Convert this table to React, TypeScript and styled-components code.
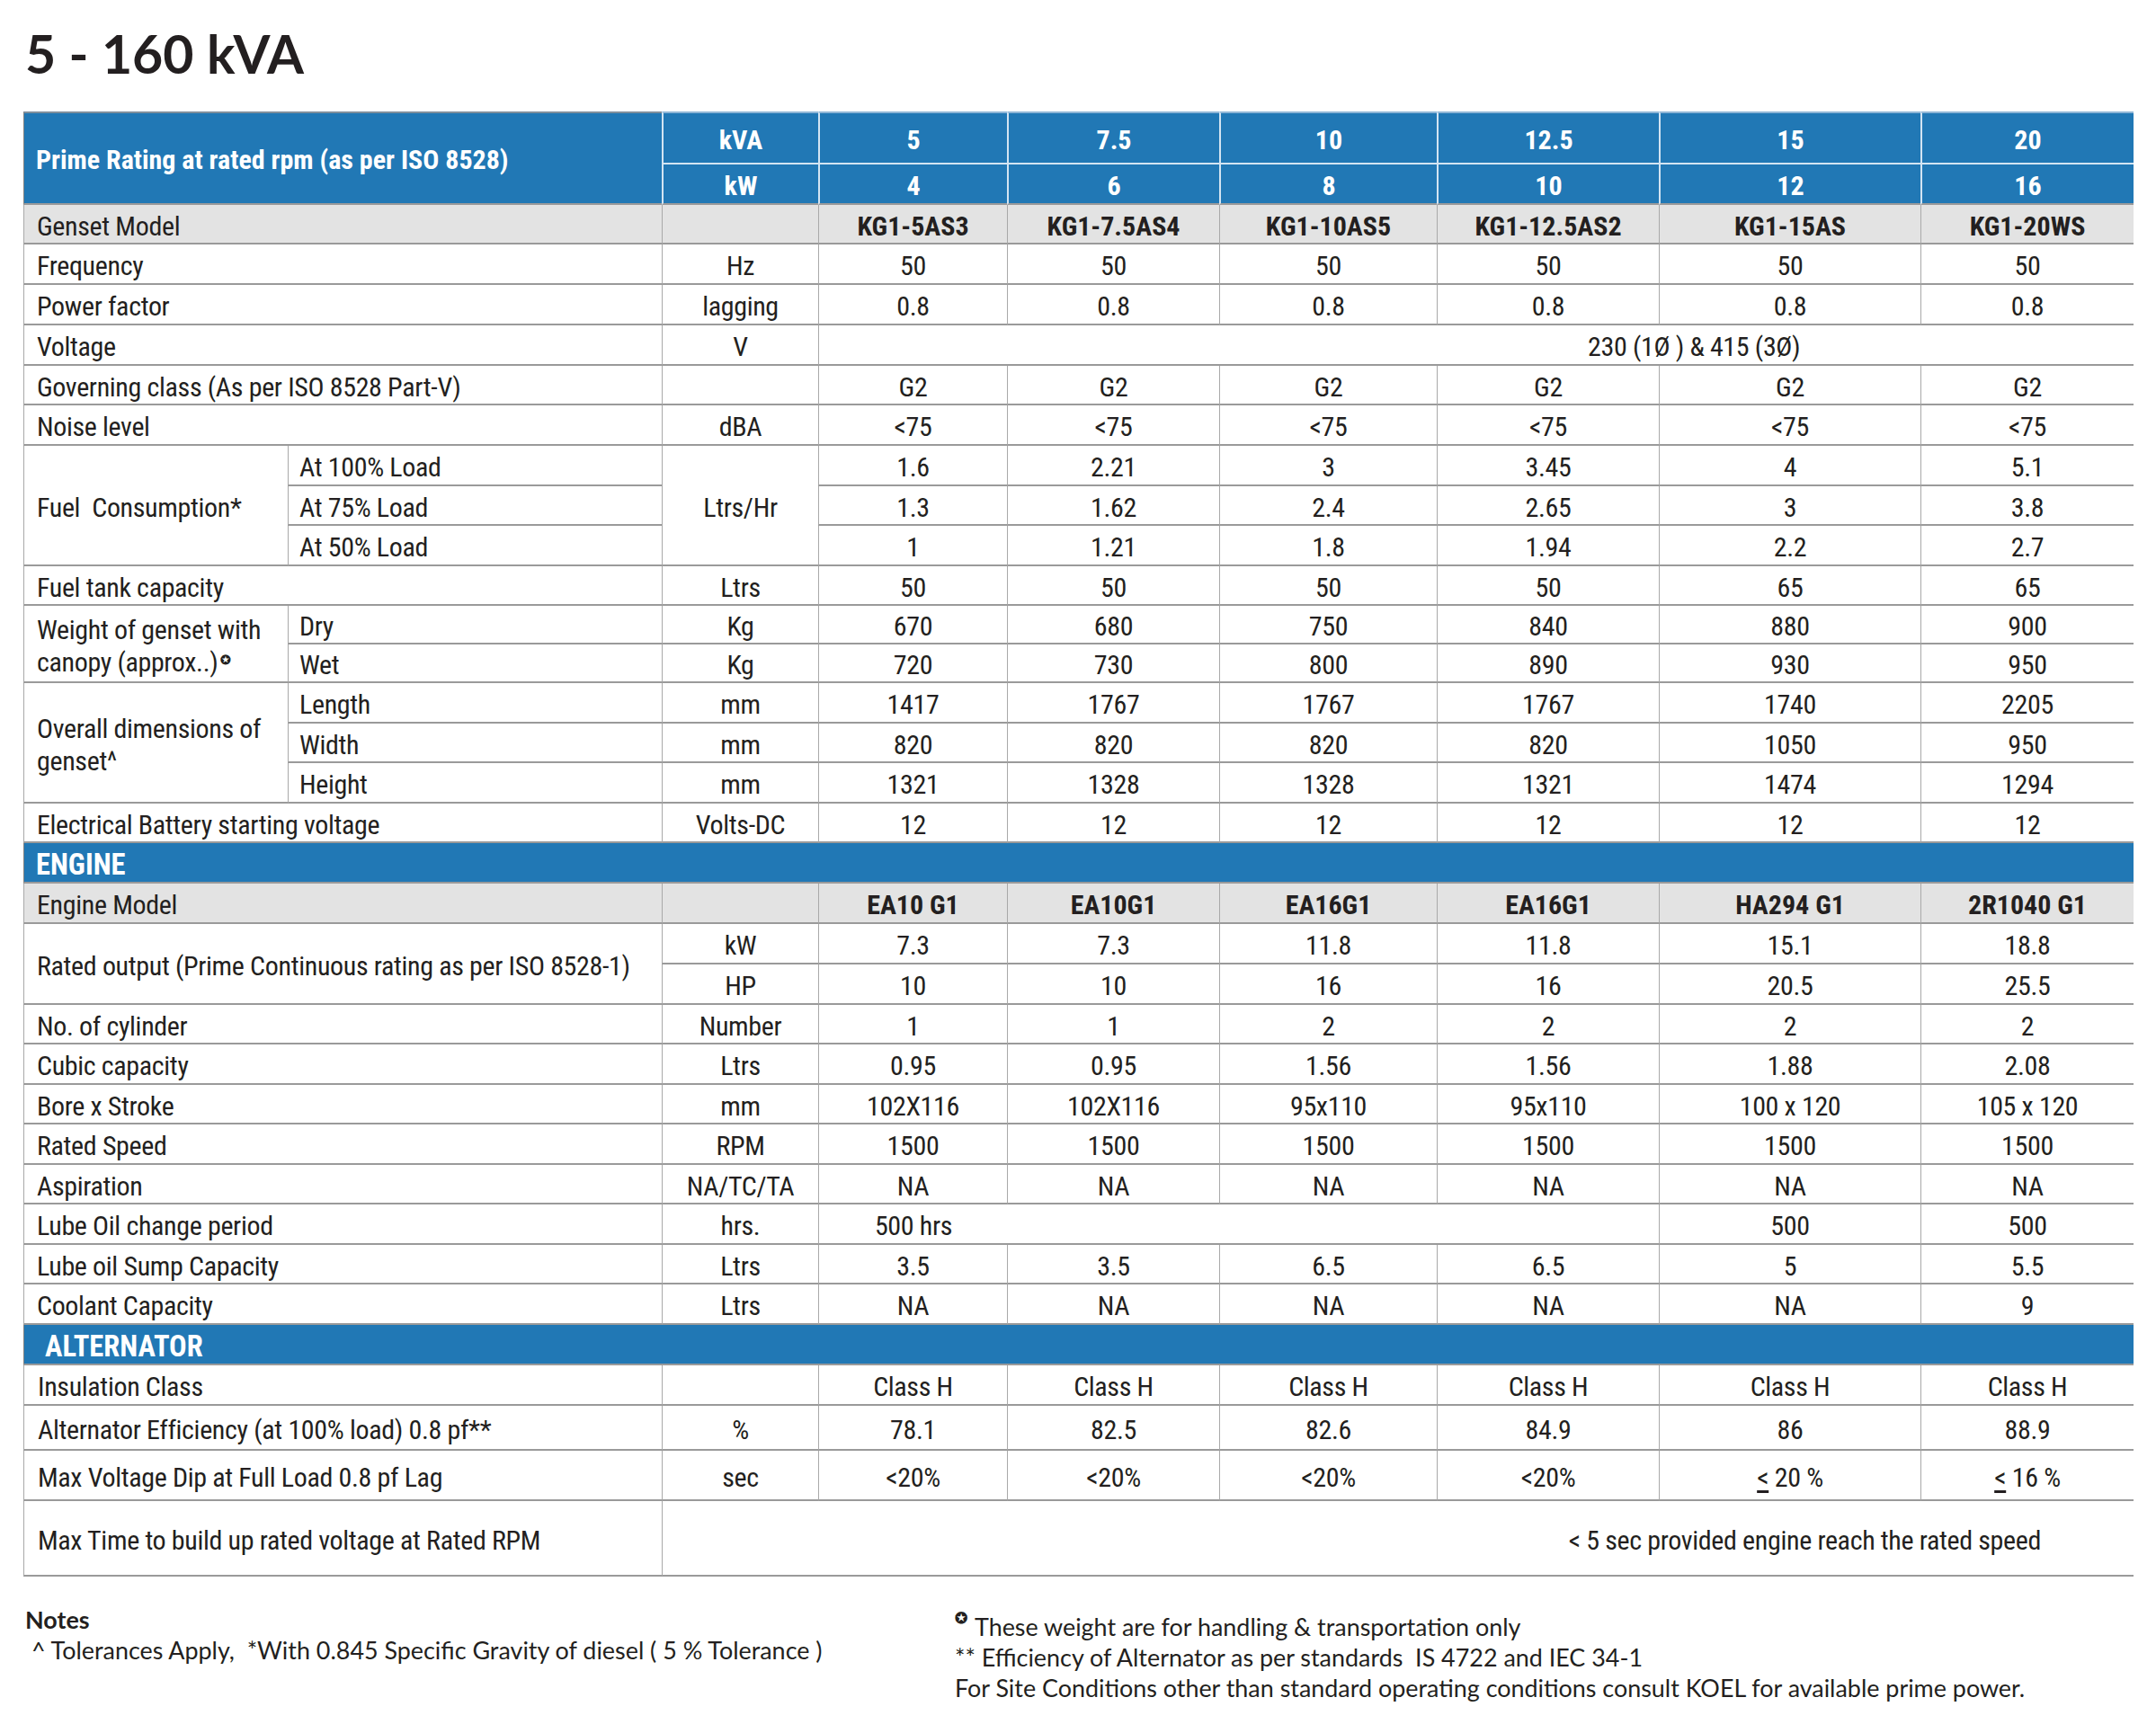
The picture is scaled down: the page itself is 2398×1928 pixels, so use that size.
import React from 'react';
import styled, { createGlobalStyle } from 'styled-components';

const BLUE = '#2178b5';
const SHADE = '#e3e3e3';
const HLINE = '#9a9a9a';
const VLINE = '#a9a9a9';
const HEADLINE = '#d3e4f2';
const INK = '#231f20';
const NARROW = '"Roboto Condensed", "Roboto", "Liberation Sans", sans-serif';

const GlobalStyle = createGlobalStyle`
  html, body { margin: 0; padding: 0; background: #ffffff; }
  body { color: ${INK}; font-family: ${NARROW}; }
`;

const Page = styled.div`
  width: 2398px;
  min-height: 1928px;
  box-sizing: border-box;
  padding: 28px 0 0 26px;
`;

const Title = styled.h1`
  margin: 0 0 32px 2px;
  font-family: Lato, "Open Sans", sans-serif;
  font-weight: 700;
  font-size: 59px;
  line-height: 64px;
  color: ${INK};
`;

const Table = styled.div`
  display: grid;
  width: 2347px;
  grid-template-columns: 294px 416px 174px 210px 236px 242px 247px 291px 237px;
  grid-template-rows:
    59px 45px 44px 45px 45px 45px 44px 45px 45px 44px 45px 44px 43px 43px 45px 44px 45px 44px
    45px 45px 45px 45px 44px 45px 44px 45px 44px 45px 44px 45px
    45px 45px 50px 56px 84px;
  font-family: ${NARROW};
  font-stretch: condensed;
  font-size: 30px;
  letter-spacing: -0.35px;
  color: ${INK};
`;

type SpanProps = { $span?: number; $rows?: number };

const Head = styled.div<SpanProps & { $first?: boolean; $bottom?: boolean }>`
  grid-column: span ${(p) => p.$span ?? 1};
  grid-row: span ${(p) => p.$rows ?? 1};
  box-sizing: border-box;
  display: flex;
  align-items: center;
  justify-content: ${(p) => (p.$first ? 'flex-start' : 'center')};
  padding-left: ${(p) => (p.$first ? '13px' : '0')};
  padding-top: 3px;
  background: ${BLUE};
  color: #ffffff;
  font-weight: 700;
  letter-spacing: 0;
  border-top: 2px solid ${(p) => (p.$first ? '#7f8f9c' : '#8fb6d6')};
  border-left: ${(p) => (p.$first ? `1px solid #808080` : `2px solid ${HEADLINE}`)};
  border-bottom: 2px solid ${(p) => (p.$bottom ? HLINE : HEADLINE)};
`;

const HeadSub = styled(Head)`
  border-top: none;
`;

const Section = styled.div<{ $indent: number }>`
  grid-column: span 9;
  box-sizing: border-box;
  display: flex;
  align-items: center;
  padding-left: ${(p) => p.$indent}px;
  padding-top: 4px;
  background: ${BLUE};
  color: #ffffff;
  font-weight: 700;
  font-size: 32.5px;
  letter-spacing: 0;
  border-left: 1px solid #808080;
  border-bottom: 2px solid ${HLINE};
`;

const Cell = styled.div<SpanProps & { $shade?: boolean }>`
  grid-column: span ${(p) => p.$span ?? 1};
  grid-row: span ${(p) => p.$rows ?? 1};
  box-sizing: border-box;
  display: flex;
  align-items: center;
  min-width: 0;
  padding-top: 5px;
  background: ${(p) => (p.$shade ? SHADE : '#ffffff')};
  border-left: 1px solid ${VLINE};
  border-bottom: 2px solid ${HLINE};
  line-height: 36px;
`;

const Label = styled(Cell)<{ $pad?: number }>`
  padding-left: ${(p) => p.$pad ?? 14}px;
  padding-right: 8px;
  white-space: pre-wrap;
`;

const Lines = styled.div`
  display: flex;
  flex-direction: column;
`;

const Line = styled.div`
  white-space: pre;
`;

const Value = styled(Cell)<{ $bold?: boolean }>`
  justify-content: center;
  font-weight: ${(p) => (p.$bold ? 700 : 400)};
  letter-spacing: ${(p) => (p.$bold ? '0' : '-0.35px')};
  white-space: pre;
`;

const Wide = styled(Cell)<{ $from: 'left' | 'right'; $offset: number }>`
  justify-content: ${(p) => (p.$from === 'left' ? 'flex-start' : 'flex-end')};
  padding-left: ${(p) => (p.$from === 'left' ? p.$offset : 0)}px;
  padding-right: ${(p) => (p.$from === 'right' ? p.$offset : 0)}px;
  white-space: pre;
`;

const Slot = styled.span<{ $w: number }>`
  display: inline-block;
  width: ${(p) => p.$w}px;
  text-align: center;
`;

const Mark = styled.span`
  display: inline-block;
  font-size: 14px;
  font-weight: 700;
  line-height: 14px;
  vertical-align: 8px;
  margin-left: 3px;
`;

const Le = styled.span`
  text-decoration: underline;
  text-underline-offset: 4px;
`;

const Footer = styled.div`
  display: flex;
  margin-top: 31px;
  font-family: Lato, "Open Sans", sans-serif;
  font-size: 26.9px;
  line-height: 34px;
  color: ${INK};
`;

const NotesLeft = styled.div`
  width: 1034px;
  padding-left: 2px;
`;

const NotesTitle = styled.div`
  font-weight: 700;
`;

const NoteLine = styled.div`
  white-space: pre;
`;

const NotesRight = styled.div`
  margin-top: 8px;
`;

const Star = styled.span`
  display: inline-block;
  font-size: 17px;
  font-weight: 700;
  vertical-align: 14px;
  line-height: 0;
  margin-right: 8px;
`;

const kva = ['5', '7.5', '10', '12.5', '15', '20'];
const kw = ['4', '6', '8', '10', '12', '16'];
const models = ['KG1-5AS3', 'KG1-7.5AS4', 'KG1-10AS5', 'KG1-12.5AS2', 'KG1-15AS', 'KG1-20WS'];
const six = (v: string) => [v, v, v, v, v, v];

type RowDef = { label: string; unit: string; values: React.ReactNode[] };

const genset1: RowDef[] = [
  { label: 'Frequency', unit: 'Hz', values: six('50') },
  { label: 'Power factor', unit: 'lagging', values: six('0.8') },
];

const genset2: RowDef[] = [
  { label: 'Governing class (As per ISO 8528 Part-V)', unit: '', values: six('G2') },
  { label: 'Noise level', unit: 'dBA', values: six('<75') },
];

const fuel = [
  { sub: 'At 100% Load', values: ['1.6', '2.21', '3', '3.45', '4', '5.1'] },
  { sub: 'At 75% Load', values: ['1.3', '1.62', '2.4', '2.65', '3', '3.8'] },
  { sub: 'At 50% Load', values: ['1', '1.21', '1.8', '1.94', '2.2', '2.7'] },
];

const weight = [
  { sub: 'Dry', unit: 'Kg', values: ['670', '680', '750', '840', '880', '900'] },
  { sub: 'Wet', unit: 'Kg', values: ['720', '730', '800', '890', '930', '950'] },
];

const dims = [
  { sub: 'Length', unit: 'mm', values: ['1417', '1767', '1767', '1767', '1740', '2205'] },
  { sub: 'Width', unit: 'mm', values: ['820', '820', '820', '820', '1050', '950'] },
  { sub: 'Height', unit: 'mm', values: ['1321', '1328', '1328', '1321', '1474', '1294'] },
];

const engineRows: RowDef[] = [
  { label: 'No. of cylinder', unit: 'Number', values: ['1', '1', '2', '2', '2', '2'] },
  { label: 'Cubic capacity', unit: 'Ltrs', values: ['0.95', '0.95', '1.56', '1.56', '1.88', '2.08'] },
  { label: 'Bore x Stroke', unit: 'mm', values: ['102X116', '102X116', '95x110', '95x110', '100 x 120', '105 x 120'] },
  { label: 'Rated Speed', unit: 'RPM', values: six('1500') },
  { label: 'Aspiration', unit: 'NA/TC/TA', values: six('NA') },
];

const engineRows2: RowDef[] = [
  { label: 'Lube oil Sump Capacity', unit: 'Ltrs', values: ['3.5', '3.5', '6.5', '6.5', '5', '5.5'] },
  { label: 'Coolant Capacity', unit: 'Ltrs', values: ['NA', 'NA', 'NA', 'NA', 'NA', '9'] },
];

const altRows: RowDef[] = [
  { label: 'Insulation Class', unit: '', values: six('Class H') },
  { label: 'Alternator Efficiency (at 100% load) 0.8 pf**', unit: '%', values: ['78.1', '82.5', '82.6', '84.9', '86', '88.9'] },
  {
    label: 'Max Voltage Dip at Full Load 0.8 pf Lag',
    unit: 'sec',
    values: [
      '<20%',
      '<20%',
      '<20%',
      '<20%',
      <>
        <Le>&lt;</Le> 20 %
      </>,
      <>
        <Le>&lt;</Le> 16 %
      </>,
    ],
  },
];

const Values: React.FC<{ values: React.ReactNode[]; shade?: boolean; bold?: boolean }> = ({ values, shade, bold }) => (
  <>
    {values.map((v, i) => (
      <Value key={i} $shade={shade} $bold={bold}>
        {v}
      </Value>
    ))}
  </>
);

const SimpleRow: React.FC<{ row: RowDef; pad?: number }> = ({ row, pad }) => (
  <>
    <Label $span={2} $pad={pad}>
      {row.label}
    </Label>
    <Value>{row.unit}</Value>
    <Values values={row.values} />
  </>
);

export default function App() {
  return (
    <>
      <GlobalStyle />
      <Page>
        <Title>5 - 160 kVA</Title>
        <Table>
          <Head $span={2} $rows={2} $first $bottom>
            Prime Rating at rated rpm (as per ISO 8528)
          </Head>
          <Head>kVA</Head>
          {kva.map((v) => (
            <Head key={v}>{v}</Head>
          ))}
          <HeadSub $bottom>kW</HeadSub>
          {kw.map((v) => (
            <HeadSub key={v} $bottom>
              {v}
            </HeadSub>
          ))}

          <Label $span={2} $shade>
            Genset Model
          </Label>
          <Value $shade />
          <Values values={models} shade bold />

          {genset1.map((r) => (
            <SimpleRow key={r.label} row={r} />
          ))}

          <Label $span={2}>Voltage</Label>
          <Value>V</Value>
          <Wide $span={6} $from="left" $offset={855}>
            230 (1Ø ) &amp; 415 (3Ø)
          </Wide>

          {genset2.map((r) => (
            <SimpleRow key={r.label} row={r} />
          ))}

          <Label $rows={3}>{'Fuel  Consumption*'}</Label>
          <Label $pad={12}>{fuel[0].sub}</Label>
          <Value $rows={3}>Ltrs/Hr</Value>
          <Values values={fuel[0].values} />
          <Label $pad={12}>{fuel[1].sub}</Label>
          <Values values={fuel[1].values} />
          <Label $pad={12}>{fuel[2].sub}</Label>
          <Values values={fuel[2].values} />

          <SimpleRow row={{ label: 'Fuel tank capacity', unit: 'Ltrs', values: ['50', '50', '50', '50', '65', '65'] }} />

          <Label $rows={2}>
            <Lines>
              <Line>Weight of genset with</Line>
              <Line>
                canopy (approx..)<Mark>✪</Mark>
              </Line>
            </Lines>
          </Label>
          {weight.map((w) => (
            <React.Fragment key={w.sub}>
              <Label $pad={12}>{w.sub}</Label>
              <Value>{w.unit}</Value>
              <Values values={w.values} />
            </React.Fragment>
          ))}

          <Label $rows={3}>
            <Lines>
              <Line>Overall dimensions of</Line>
              <Line>genset^</Line>
            </Lines>
          </Label>
          {dims.map((d) => (
            <React.Fragment key={d.sub}>
              <Label $pad={12}>{d.sub}</Label>
              <Value>{d.unit}</Value>
              <Values values={d.values} />
            </React.Fragment>
          ))}

          <SimpleRow row={{ label: 'Electrical Battery starting voltage', unit: 'Volts-DC', values: six('12') }} />

          <Section $indent={13}>ENGINE</Section>

          <Label $span={2} $shade>
            Engine Model
          </Label>
          <Value $shade />
          <Values values={['EA10 G1', 'EA10G1', 'EA16G1', 'EA16G1', 'HA294 G1', '2R1040 G1']} shade bold />

          <Label $span={2} $rows={2}>
            Rated output (Prime Continuous rating as per ISO 8528-1)
          </Label>
          <Value>kW</Value>
          <Values values={['7.3', '7.3', '11.8', '11.8', '15.1', '18.8']} />
          <Value>HP</Value>
          <Values values={['10', '10', '16', '16', '20.5', '25.5']} />

          {engineRows.map((r) => (
            <SimpleRow key={r.label} row={r} />
          ))}

          <Label $span={2}>Lube Oil change period</Label>
          <Value>hrs.</Value>
          <Wide $span={4} $from="left" $offset={0}>
            <Slot $w={210}>500 hrs</Slot>
          </Wide>
          <Value>500</Value>
          <Value>500</Value>

          {engineRows2.map((r) => (
            <SimpleRow key={r.label} row={r} />
          ))}

          <Section $indent={23}>ALTERNATOR</Section>

          {altRows.map((r) => (
            <SimpleRow key={r.label} row={r} pad={15} />
          ))}

          <Label $span={2} $pad={15}>
            Max Time to build up rated voltage at Rated RPM
          </Label>
          <Wide $span={7} $from="right" $offset={103}>
            &lt; 5 sec provided engine reach the rated speed
          </Wide>
        </Table>

        <Footer>
          <NotesLeft>
            <NotesTitle>Notes</NotesTitle>
            <NoteLine>{' ^ Tolerances Apply,  *With 0.845 Specific Gravity of diesel ( 5 % Tolerance )'}</NoteLine>
          </NotesLeft>
          <NotesRight>
            <NoteLine>
              <Star>✪</Star>These weight are for handling &amp; transportation only
            </NoteLine>
            <NoteLine>{'** Efficiency of Alternator as per standards  IS 4722 and IEC 34-1'}</NoteLine>
            <NoteLine>For Site Conditions other than standard operating conditions consult KOEL for available prime power.</NoteLine>
          </NotesRight>
        </Footer>
      </Page>
    </>
  );
}
